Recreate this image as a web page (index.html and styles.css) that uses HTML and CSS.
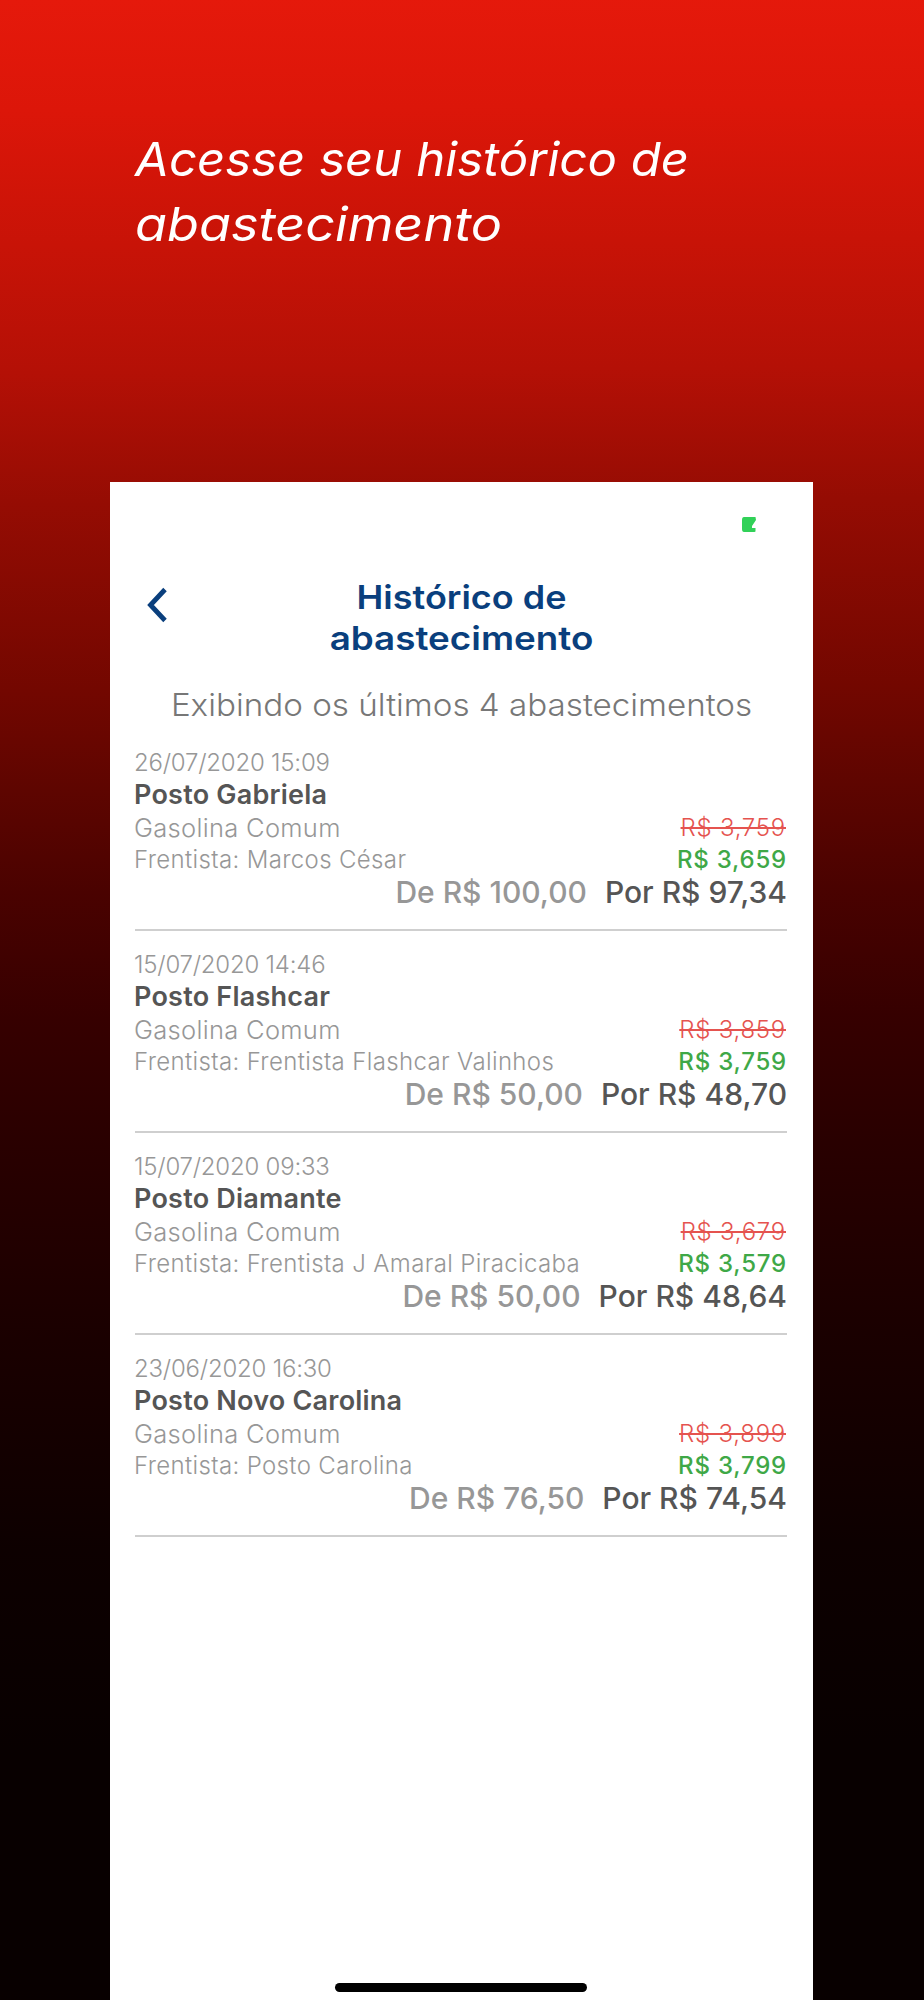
FILE: index.html
```html
<!DOCTYPE html>
<html lang="pt-BR">
<head>
<meta charset="utf-8">
<title>Histórico de abastecimento</title>
<link rel="stylesheet" href="styles.css">
</head>
<body>
<main class="promo">
  <h1 class="headline"><span class="headline-first">Acesse seu histórico de</span><span class="headline-second">abastecimento</span></h1>
  <section class="phone">
    <div class="status">
      <svg class="battery" width="16" height="17" viewBox="0 0 16 17"><path d="M3 1H14.5L15 4L11 10V12H14.5V15.5L13.5 16H3Q1 16 1 13V4Q1 1 3 1Z" fill="#31d158"/></svg>
    </div>
    <header class="bar">
      <svg class="back" width="22" height="36" viewBox="0 0 22 36"><path d="M19 2.5L4.5 18L19 33.5" fill="none" stroke="#0a3f7d" stroke-width="4.8"/></svg>
      <h2 class="title"><span class="title-first">Histórico de</span><span class="title-second">abastecimento</span></h2>
    </header>
    <p class="subtitle">Exibindo os últimos 4 abastecimentos</p>
    <div class="list">
      <article class="item">
        <div class="date">26/07/2020 15:09</div>
        <div class="name">Posto Gabriela</div>
        <div class="row fuel"><span>Gasolina Comum</span><s class="old">R$ 3,759</s></div>
        <div class="row clerk"><span>Frentista: Marcos César</span><span class="new">R$ 3,659</span></div>
        <div class="total"><span class="from">De R$ 100,00</span><span class="to">Por R$ 97,34</span></div>
      </article>
      <article class="item">
        <div class="date">15/07/2020 14:46</div>
        <div class="name">Posto Flashcar</div>
        <div class="row fuel"><span>Gasolina Comum</span><s class="old">R$ 3,859</s></div>
        <div class="row clerk"><span>Frentista: Frentista Flashcar Valinhos</span><span class="new">R$ 3,759</span></div>
        <div class="total"><span class="from">De R$ 50,00</span><span class="to">Por R$ 48,70</span></div>
      </article>
      <article class="item">
        <div class="date">15/07/2020 09:33</div>
        <div class="name">Posto Diamante</div>
        <div class="row fuel"><span>Gasolina Comum</span><s class="old">R$ 3,679</s></div>
        <div class="row clerk"><span>Frentista: Frentista J Amaral Piracicaba</span><span class="new">R$ 3,579</span></div>
        <div class="total"><span class="from">De R$ 50,00</span><span class="to">Por R$ 48,64</span></div>
      </article>
      <article class="item">
        <div class="date">23/06/2020 16:30</div>
        <div class="name">Posto Novo Carolina</div>
        <div class="row fuel"><span>Gasolina Comum</span><s class="old">R$ 3,899</s></div>
        <div class="row clerk"><span>Frentista: Posto Carolina</span><span class="new">R$ 3,799</span></div>
        <div class="total"><span class="from">De R$ 76,50</span><span class="to">Por R$ 74,54</span></div>
      </article>
    </div>
    <div class="home"></div>
  </section>
</main>
</body>
</html>
```
FILE: styles.css
```css
* { box-sizing: border-box; margin: 0; }
body { font-family: Inter, "Liberation Sans", sans-serif; }
.promo {
  width: 924px;
  height: 2000px;
  display: flex;
  flex-direction: column;
  padding: 126px 111px 0 110px;
  background: linear-gradient(179.6deg, #e5190b 0, #dc1609 110px, #c81307 245px, #b41006 373px, #950c03 505px, #730700 690px, #5e0500 790px, #4a0200 893px, #360000 1020px, #290000 1148px, #1a0000 1339px, #0d0000 1550px, #080000 1750px, #080000 2000px);
}
.headline {
  height: 356px;
  padding-left: 25px;
  font-size: 47px;
  font-style: italic;
  font-weight: 400;
  line-height: 65px;
  color: #fff;
  font-feature-settings: "cv11";
}
.headline span, .title span { display: block; white-space: nowrap; }
.headline span { transform-origin: 0 50%; }
.headline-first { transform: scaleX(1.045); }
.headline-second { transform: scaleX(1.11); }
.phone {
  flex: 1;
  display: flex;
  flex-direction: column;
  background: #fff;
}
.status { height: 95px; padding: 34px 56px 0 0; text-align: right; }
.battery { display: block; margin-left: auto; }
.bar { position: relative; }
.back { position: absolute; left: 36px; top: 10px; }
.title {
  text-align: center;
  font-size: 33px;
  font-weight: 600;
  line-height: 41.4px;
  color: #0a3f7d;
}
.title-first { transform: scaleX(1.09); }
.title-second { transform: scaleX(1.115); }
.subtitle {
  margin-top: 25.5px;
  text-align: center;
  font-size: 31px;
  font-weight: 300;
  line-height: 40px;
  transform: scaleX(1.07);
  color: #777;
  white-space: nowrap;
}
.list { margin-top: 21.2px; padding: 0 26px 0 25px; }
.item {
  height: 184px;
  margin-bottom: 18.3px;
  border-bottom: 2px solid #cfcfcf;
  color: #979797;
  font-weight: 300;
  white-space: nowrap;
}
.date, .name, .row > span:first-child { margin-left: -1px; }
.date { font-size: 24px; line-height: 31px; letter-spacing: -.22px; }
.name { font-size: 27px; line-height: 34px; font-weight: 600; letter-spacing: .22px; color: #555; }
.row { display: flex; justify-content: space-between; }
.fuel { font-size: 25.5px; line-height: 32px; letter-spacing: .3px; }
.clerk { font-size: 24px; line-height: 31px; letter-spacing: .36px; }
.old { font-size: 24px; letter-spacing: .75px; color: #e5534f; text-decoration-thickness: 2px; margin-right: 1px; }
.new { font-weight: 500; letter-spacing: .8px; color: #3fa847; }
.total { display: flex; justify-content: flex-end; gap: 18px; font-size: 30px; line-height: 35px; font-weight: 500; }
.to { color: #555; }
.home { width: 252px; height: 9px; margin: auto auto 8px 225px; border-radius: 5px; background: #000; }
```
